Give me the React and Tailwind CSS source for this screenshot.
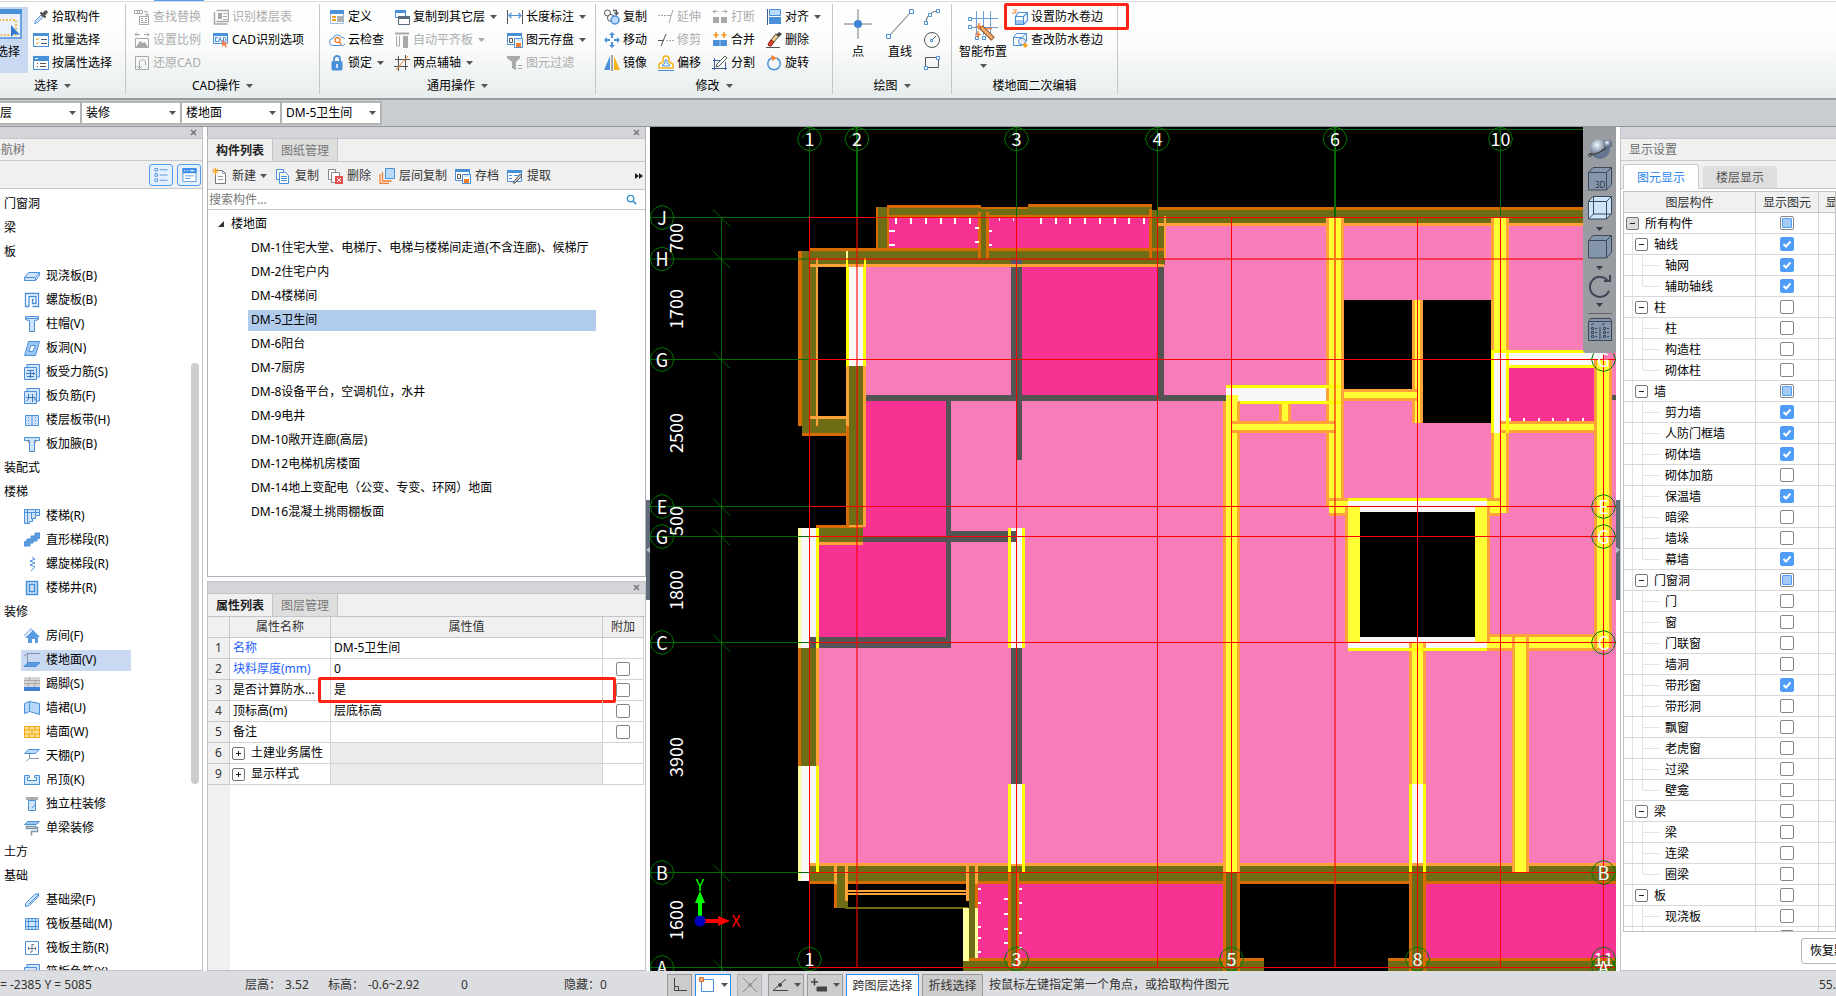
import React, { useState } from 'react';

const B = '#4a90d9';
const L = '#cfe4fb';
const G = '#a8a8a8';
const K = '#555';

// 16x16 line icons for the ribbon, toolbars and navigation tree
const icons = {
  pick: <><path d="M1.500 14.500l1-3 6-6 2 2-6 6z" fill="#cfe4fb" stroke="#5a9be0" /><path d="M7.500 3.500l5 5" stroke="#444" strokeWidth="2" /><path d="M10 6l3-3" stroke="#555" strokeWidth="3.500" strokeLinecap="round" /></>,
  batch: <><rect x=".5" y="1.5" width="15" height="13" fill="#fff" stroke={B} /><path d="M0 1h16v3H0z" fill={B} /><path d="M3 7l1 1 2-2M3 11l1 1 2-2" stroke="#f0a020" /><path d="M8 7.500h6M8 11.500h6" stroke={K} /></>,
  attr: <><rect x=".5" y="1.5" width="15" height="13" fill="#fff" stroke={B} /><path d="M0 1h16v5H0z" fill={B} /><path d="M2 3.500h3" stroke="#fff" /><path d="M4 8.500h1M4 11.500h1M7 8.500h6M7 11.500h6" stroke={K} /></>,
  find: <><path d="M.5 1.500h8v3h-8zM3.500 2v3M5.500 2v3M10 2.500h3v4M11 5l2 2 2-2" stroke={G} /><path d="M5.500 7.500h9v8h-9z" stroke={G} /><path d="M7 9.500h2M11 9.500h2M7 11.500h2M11 11.500h2M7 13.500h6" stroke={G} /></>,
  scale: <><path d="M1 2.500h5M3 .5l-2 2 2 2M10 2.500h5M13 .5l2 2-2 2" stroke={G} /><path d="M1.500 6.500h13v9h-13z" stroke={G} /><path d="M2 15l4-6 3 2 2-1 3 5z" fill={G} /></>,
  restore: <><path d="M1.500 1.500h13v13h-13z" stroke={G} /><path d="M5.500 13V7c0-3 6-3 6 0v3M3 11l2.500 2.500L8 11" stroke={G} /></>,
  floors: <><path d="M3.500 1.500h12v11h-12M1.500 3v12h13" stroke={G} strokeWidth="1.500" /><path d="M5 4h4v6H5z" fill={G} /><path d="M10 4.500h4M10 7.500h4M10 10.500h4" stroke={G} /></>,
  cadopt: <><path d="M.5 1.500h14v10H.5z" fill="#eaf3fd" stroke={B} /><path d="M0 1h15v3H0z" fill={B} /><path d="M4.500 5.500h-2v4h2M5.500 10L7 5.500 8.500 10M10.500 5.500v4h1l1.500-1v-2l-1.500-1z" stroke={B} /><path d="M9 8l6 4-2.500.5 1.500 3h-1.500l-1.500-2.500L9 15z" fill="#f08050" /></>,
  define: <><path d="M1.500 2.500h13v12h-13z" fill="#fff" stroke="#9bb8d8" /><path d="M1 1h14v4H1z" fill={B} /><path d="M3 8h4M3 11h4" stroke="#f0a020" strokeWidth="2" /><path d="M8 7h6v6H8z" fill="#b0b0b0" /></>,
  cloud: <><path d="M4 13.500a3.500 3.500 0 010-7 4.500 4.500 0 018.500-1A4 4 0 0113 13.500z" fill="#fff" stroke={B} /><circle cx="8.500" cy="8" r="2.500" stroke="#f08030" strokeWidth="1.300" /><path d="M10 10l2.500 2.500" stroke="#f08030" strokeWidth="1.500" /></>,
  lock: <><path d="M5 7V4a3 3 0 016 0v3" stroke={B} strokeWidth="1.800" /><rect x="2.500" y="6" width="11" height="9.500" rx="1.500" fill={B} /><path d="M8 9v4" stroke="#fff" strokeWidth="1.500" /></>,
  copyfloor: <><path d="M1.500 1.500h10v7h-10z" fill="#fff" stroke={B} /><path d="M1 1h11v3H1z" fill={B} /><path d="M4.500 7.500h11v8h-11z" fill="#fff" stroke="#5b6b7c" /><path d="M4 7h12v3H4z" fill="#5b6b7c" /></>,
  level: <><path d="M1 1.500h14" stroke={G} strokeWidth="2" /><path d="M2.500 4v10h3V4" stroke={G} /><path d="M9 4h5v12H9z" fill={G} /></>,
  axis: <><path d="M1 4.500h15M0 11.500h14M4.500 1v15M11.500 0v15" stroke={K} /><path d="M2 15L14 1" stroke="#f08030" /></>,
  dim: <><path d="M.5 1v14M15.500 1v14" stroke={K} /><path d="M2 6.500h12M4.500 4L2 6.500 4.500 9M11.500 4L14 6.500 11.500 9" stroke={B} strokeWidth="1.200" /></>,
  save: <><path d="M.5 1.500h14v11H.5z" fill="#fff" stroke={B} /><path d="M0 1h15v3H0z" fill={B} /><path d="M2.500 6.500h3v4h-3z" stroke={K} /><path d="M7.500 6.500h8v9h-8z" fill="#fff" stroke={B} /><path d="M9 7h5v2H9z" fill={L} /><path d="M9 11h5v4H9z" fill="#f08030" /></>,
  filter: <><path d="M0 1h13v2L9 7v8l-4-2V7L0 3z" fill={G} /><path d="M11 10.500h4M11 13.500h4" stroke={G} /></>,
  copy2: <><circle cx="3.500" cy="4" r="3" fill="#fff" stroke={K} /><circle cx="7" cy="9" r="3.500" fill="#fff" stroke={K} /><circle cx="11" cy="11" r="4" fill="#b9d9fa" stroke={B} strokeWidth="1.500" /><path d="M9 1.500h3.500V5M10.500 3.500l2 2 2-2" stroke={K} strokeWidth="1.300" /></>,
  move: <path d="M8 0l3 3H9v3H7V3H5zM8 16l3-3H9v-3H7v3H5zM0 8l3-3v2h3v2H3v2zM16 8l-3-3v2h-3v2h3v2z" fill={B} />,
  mirror: <><path d="M6 1v14H0z" fill={B} /><path d="M8 0v16" stroke={K} /><path d="M10 1v14h6z" fill="#f8b21c" /></>,
  extend: <><path d="M0 6.500h2M3 6.500h2M6 6.500h2M9 6.500h4" stroke={G} /><path d="M11 14l4-13" stroke={G} /></>,
  trim: <><path d="M0 8.500h6M3 14L8 2" stroke={K} /><path d="M8 8.500h2M11 8.500h2M14 8.500h2" stroke={G} /></>,
  offset: <><path d="M5 7V4a3 3 0 016 0v3l4 2v4H1V9z" fill="#fff" stroke="#f8b21c" strokeWidth="1.500" /><path d="M0 15.500h16M4.500 11V9.500l2.500-1V5h2v3.500l2.500 1V11z" stroke={B} /></>,
  breakk: <><path d="M1 2.500h5M3 .5l-2 2 2 2M10 2.500h5M13 .5l2 2-2 2" stroke={G} /><path d="M1 8h6v6H1zM9 8h6v6H9z" fill={G} /></>,
  merge: <><path d="M4 0v6M1.500 3h5M12 0v6M9.500 3h5" stroke="#f09020" strokeWidth="1.500" /><path d="M1 8h14v6H1z" fill={B} /><path d="M8 8v6" stroke="#9cc6f2" /></>,
  split: <><path d="M2.500 3v12M0 13.500h15M13.500 7v8M1 5.500h8" stroke="#3a5f96" /><path d="M4 12l1-3 8-8 2 2-8 8z" fill="#fff" stroke={K} /></>,
  align: <><path d="M3.500 .5h11v6h-11z" fill="#b9d9fa" stroke={B} /><path d="M3 8h12v7H3z" fill={B} /><path d="M1.500 0v16" stroke="#3a5f96" /></>,
  erase: <><path d="M4 9l6-7 3 2-6 7z" fill="#f3d28a" stroke="#444" /><path d="M2 12l3-4 3 2-3 4H3z" fill="#e0452c" stroke="#802010" /><path d="M0 15.500h14" stroke={K} /><path d="M10 3l3-3 3 2-3 3z" fill="#444" /></>,
  rotate: <><path d="M10.500 3a6.200 6.200 0 11-5 0" stroke={B} strokeWidth="1.500" /><path d="M5 0l6 3-5 3z" fill="#f08030" /></>,
  arc: <><path d="M2 14C2 8 6 3 13 2" stroke={K} /><path d="M.5 12.500h3v3h-3zM4.500 4.500h3v3h-3zM12.500 .5h3v3h-3z" fill="#fff" stroke={B} /></>,
  circle: <><circle cx="8" cy="8" r="7.500" stroke={K} /><path d="M8 8l4-4" stroke={K} /><path d="M6.500 7.500h2v2h-2z" fill="#fff" stroke={B} /></>,
  rect: <><path d="M1.500 2.500h13v10h-13z" stroke={K} /><path d="M.5 11.500h3v3h-3zM12.500 1.500h3v3h-3z" fill="#fff" stroke={B} /></>,
  wpset: <><path d="M3.500 7.500h8v8h-8zM3.500 7.500l3-4h9l-4 4M15.500 3.500v8l-4 4" fill="#fff" stroke={B} strokeWidth="1.200" /><path d="M4 11h7v4H4z" fill="#9cc6f2" /><path d="M1 0l3 3M4 0v4H0" stroke="#f08030" /></>,
  wpedit: <><path d="M1.500 5.500h8v8h-8zM1.500 5.500l3-4h10l-5 4M14.500 1.500v8" fill="#fff" stroke={B} /><circle cx="10" cy="9.500" r="3.500" fill="#e6e6ee" stroke={B} /><path d="M13 10.500l3 3-3 2.500-2.500-3z" fill="#f8a01c" /></>,
  newdoc: <><path d="M3.500 2.500h7l3 3v10h-10z" fill="#fff" stroke="#777" /><path d="M10.500 2.500v3h3M6 8.500h5M6 11.500h5" stroke="#999" /><path d="M0 3h7M3.500 0v7M1 .5l5 5M6 .5l-5 5" stroke="#f8a01c" /></>,
  copydoc: <><path d="M1.500 1.500h7v10h-7z" fill="#fff" stroke={B} /><path d="M4.500 4.500h6l3 3v8h-9z" fill="#fff" stroke={B} /><path d="M6 8.500h6M6 10.500h6M6 12.500h6" stroke={B} /></>,
  deldoc: <><path d="M1.500 1.500h7v10h-7z" fill="#fff" stroke="#888" /><path d="M4.500 4.500h8v10h-8z" fill="#fff" stroke="#888" /><path d="M8 8h8v8H8z" fill="#e0504c" /><path d="M10 10l4 4M14 10l-4 4" stroke="#fff" /></>,
  layercopy: <><path d="M1 6v9.500h9M3.500 4v9h9" stroke="#f08030" strokeWidth="1.300" /><path d="M6.500 .5h9v10h-9z" fill="#b9d9fa" stroke={B} /></>,
  extract: <><path d="M.5 2.500h14v11H.5z" fill="#fff" stroke={B} /><path d="M0 2h15v3H0z" fill={B} /><path d="M2 7.500h3M2 10.500h3M7 7.500h4" stroke={B} /><path d="M6 15l7-9 2 2-7 7z" fill="#ccc" stroke={K} /></>,
  slab: <path d="M.5 9.500l4-5h11l-4 5zM.5 9.500v3h11v-3M11.500 12.500l4-5v-3" fill={L} stroke={B} />,
  spiral: <path d="M5 14.500H1.500v-13h13v13h-6M5 14.500v-10h7v7H8.500v-4H10" fill="none" stroke={B} strokeWidth="1.300" />,
  cap: <path d="M1.500 .5h13v3l-3 1h-1v11h-5v-11h-1l-3-1zM2 2.500h12" fill={L} stroke={B} />,
  hole: <><path d="M.5 15.500l4-14h11l-4 14z" fill="#9cc6f2" stroke={B} /><path d="M5 11.500l2-6h4l-2 6z" fill="#fff" stroke={B} /></>,
  rebarS: <><path d="M.5 3.500h12v12H.5zM3 3V.5h12.500V13H13" fill={L} stroke={B} /><path d="M3 6.500h7M3 12.500h7M6.500 6v8M2 9.500h9M9.500 8v3" stroke="#3b78c0" /></>,
  rebarF: <><path d="M.5 3.500h12v12H.5zM3 3V.5h12.500V13H13" fill={L} stroke={B} /><path d="M4.500 6v5l-2 2M8.500 6v8M2 9.500h9v3" stroke="#3b78c0" /></>,
  band: <><path d="M1.500 3.500h13v10h-13z" fill={L} stroke={B} /><path d="M8 3v11" stroke={B} /><path d="M4.500 5v8M11.500 5v8" stroke={B} strokeDasharray="1 2" /></>,
  haunch: <><path d="M2 3l4 6V5h4v4l4-6z" fill="#f08030" /><path d="M.5 1.500h15v3h-5v11h-5v-11h-5z" fill={L} stroke={B} /></>,
  stair: <path d="M.5 1.500h15v6h-4v3h-3v3h-3v2h-5zM3.500 2v13M7.500 4v7M11.500 2v5M1 4.500h14" fill={L} stroke={B} />,
  flight: <path d="M0 14v-4l3-1V7h4V4h4V1h5v5l-3 1v2H9v2H6v3z" fill="#5a9be0" stroke={B} />,
  helix: <path d="M8 1l3 2-5 2 5 2-5 2 5 2-4 4" fill="none" stroke={B} />,
  well: <path d="M2.500 1.500h11v13h-11zM5.500 4.500h5v7h-5z" fill={L} stroke={B} strokeWidth="1.500" />,
  room: <><path d="M0 8l7-7 2 2" stroke="#9cc6f2" strokeWidth="1.500" /><path d="M1 10l8-8 7 7h-2v6h-3v-4H8v4H4v-5z" fill="#5a9be0" /></>,
  floor: <><path d="M3.500 11V1.500H16M0 4l4-3" stroke="#8095a8" /><path d="M0 14.500l4-4h12l-4 4z" fill="#5a9be0" stroke={B} /></>,
  skirting: <><path d="M0 1h16v10H0z" fill="#d5d5d5" /><path d="M0 4.500h16M0 7.500h16M5.500 1v3M11.500 4v3M4.500 8v3M10.500 8v3" stroke="#aaa" /><path d="M0 11h16v4H0z" fill="#3f84d6" /></>,
  dado: <path d="M.5 3.500l5-2v10l-5 2zM5.500 1.500l10 2v11l-10-3z" fill="#b9d9fa" stroke={B} />,
  wall: <path d="M.5 2.500h15v11H.5zM.5 6h15M.5 10h15M5 2.500V6M11 2.500V6M8 6v4M5 10v3.500M11 10v3.500" fill="#fddc8c" stroke="#f0a818" />,
  ceiling: <><path d="M.5 5.500l4-4h11l-4 4z" fill="#b9d9fa" stroke={B} /><path d="M2 13.500l3-3h10M5.500 6v5" stroke="#8095a8" /></>,
  hung: <path d="M.5 3.500h5v2h-2v3h9v-3h-2v-2h5v9H.5z" fill={L} stroke={B} />,
  pillar: <><path d="M2 1h12v3H2z" fill="#aaa" /><path d="M4.500 4.500h7v10h-7zM8 12l4-4" fill={L} stroke={B} /></>,
  beamdec: <><path d="M.5 4.500l3-3h12l-3 3z" fill="#9cc6f2" stroke={B} /><path d="M2.500 6.500h9v2h-9zM12 7.500h1.500v4H7.500v4" stroke="#8095a8" fill="none" strokeWidth="1.500" /></>,
  fbeam: <path d="M1.500 11.500l9-9 4-1v3l-9 9-4 1zM5 12l9-9" fill={L} stroke={B} />,
  raft: <path d="M1.500 2.500h13v11h-13zM4.500 2v12M11.500 2v12M1 5.500h14M1 10.500h14M8 2v3M8 11v3" fill={L} stroke={B} />,
  raftmain: <><path d="M1.500 1.500h13v13h-13z" fill="#fff" stroke={B} /><path d="M4 8.500h8M8 4v8M4.500 7v3M11.500 7v3M8 4.500h2M6 12h2" stroke="#778" /></>,
  tree: <><path d="M.5 .5h3v3h-3zM.5 6.500h3v3h-3zM.5 12.500h3v3h-3z" stroke={B} /><path d="M6 2h9M6 8h9M6 14h9" stroke={B} /></>,
  card: <><path d="M.5 .5h15v15H.5z" fill="#fff" stroke={B} /><path d="M0 0h16v6H0z" fill="#3f90ec" /><path d="M2 3h1M5 3h1M9 3h4" stroke="#fff" strokeWidth="1.500" /><path d="M3 9h10M3 12h6" stroke={B} /></>,
};

const Icon = ({ name, className = 'w-4 h-4' }) => (
  <svg viewBox="0 0 16 16" className={`${className} shrink-0`} fill="none" stroke="none" aria-hidden="true">{icons[name]}</svg>
);

const Caret = ({ color = '#555' }) => (
  <svg viewBox="0 0 7 4" className="w-[7px] h-1 shrink-0" aria-hidden="true"><path d="M0 0h7L3.500 4z" fill={color} /></svg>
);

const Tool = ({ icon, label, off, menu, mark }) => (
  <button className={`relative flex h-[23px] items-center gap-[3px] whitespace-nowrap ${off ? 'text-[#adadad]' : 'text-black'}`}>
    <Icon name={icon} />
    <span>{label}</span>
    {menu && <span className="ml-[2px]"><Caret color={off ? '#aaa' : '#555'} /></span>}
    {mark && <span className="absolute -top-[2px] -bottom-[2px] -left-2 -right-[26px] rounded-[2px] border-[3px] border-[#ff2413]" />}
  </button>
);

const Column = ({ items }) => (
  <div className="flex flex-col items-start">
    {items.map((t) => <Tool key={t.label} {...t} />)}
  </div>
);

const Group = ({ label, className, children, menu = true }) => (
  <section className={`flex shrink-0 flex-col pt-[5px] ${className}`}>
    <div className="flex h-[69px]">{children}</div>
    <div className="flex h-[26px] items-center justify-center gap-[6px]">
      <span>{label}</span>
      {menu && <Caret />}
    </div>
  </section>
);

const Divider = () => <div className="my-1 w-px shrink-0 bg-[#c4c6c8]" />;

const cadTools = [
  [{ icon: 'find', label: '查找替换', off: true }, { icon: 'scale', label: '设置比例', off: true }, { icon: 'restore', label: '还原CAD', off: true }],
  [{ icon: 'floors', label: '识别楼层表', off: true }, { icon: 'cadopt', label: 'CAD识别选项' }],
];
const commonTools = [
  [{ icon: 'define', label: '定义' }, { icon: 'cloud', label: '云检查' }, { icon: 'lock', label: '锁定', menu: true }],
  [{ icon: 'copyfloor', label: '复制到其它层', menu: true }, { icon: 'level', label: '自动平齐板', off: true, menu: true }, { icon: 'axis', label: '两点辅轴', menu: true }],
  [{ icon: 'dim', label: '长度标注', menu: true }, { icon: 'save', label: '图元存盘', menu: true }, { icon: 'filter', label: '图元过滤', off: true }],
];
const modifyTools = [
  [{ icon: 'copy2', label: '复制' }, { icon: 'move', label: '移动' }, { icon: 'mirror', label: '镜像' }],
  [{ icon: 'extend', label: '延伸', off: true }, { icon: 'trim', label: '修剪', off: true }, { icon: 'offset', label: '偏移' }],
  [{ icon: 'breakk', label: '打断', off: true }, { icon: 'merge', label: '合并' }, { icon: 'split', label: '分割' }],
  [{ icon: 'align', label: '对齐', menu: true }, { icon: 'erase', label: '删除' }, { icon: 'rotate', label: '旋转' }],
];

const Ribbon = () => (
  <header className="h-[100px] shrink-0 overflow-hidden border-b-2 border-[#969a9c] bg-gradient-to-b from-white via-[#fafbfb] to-[#e6ecec]">
    <div className="flex h-[2px] border-b border-[#d8d8d8]"><span className="ml-[154px] w-[50px] bg-[#4f9df0]" /></div>
    <div className="-mt-[2px] flex h-[98px]">
      <Group label="选择" className="w-[125px] [&>div:last-child]:pr-5">
        <button className="mt-[2px] -ml-3 flex h-[66px] w-10 shrink-0 flex-col items-center bg-[#c9d9f1] pt-[2px]">
          <svg viewBox="0 0 28 30" className="h-[30px] w-7" aria-hidden="true">
            <path d="M1 1h26v28H1z" fill="#eaf1fa" stroke={B} strokeWidth="1.500" />
            <path d="M0 0h28v5H0z" fill={B} />
            <path d="M5 11h17v15H5z" fill="none" stroke="#f0b020" strokeWidth="1.500" strokeDasharray="2 1.500" />
            <path d="M17 16v12l3-3 6 1z" fill="#2f7ad0" />
          </svg>
          <span className="mt-[5px]">选择</span>
        </button>
        <div className="ml-[5px]">
          <Column items={[{ icon: 'pick', label: '拾取构件' }, { icon: 'batch', label: '批量选择' }, { icon: 'attr', label: '按属性选择' }]} />
        </div>
      </Group>
      <Divider />
      <Group label="CAD操作" className="w-[193px]">
        <div className="flex gap-3 pl-2">{cadTools.map((c) => <Column key={c[0].label} items={c} />)}</div>
      </Group>
      <Divider />
      <Group label="通用操作" className="w-[275px]">
        <div className="flex gap-[10px] pl-[9px]">{commonTools.map((c) => <Column key={c[0].label} items={c} />)}</div>
      </Group>
      <Divider />
      <Group label="修改" className="w-[236px]">
        <div className="flex gap-[11px] pl-2">{modifyTools.map((c) => <Column key={c[0].label} items={c} />)}</div>
      </Group>
      <Divider />
      <Group label="绘图" className="w-[118px]">
        <button className="ml-[9px] flex w-8 flex-col items-center pt-1">
          <svg viewBox="0 0 28 30" className="h-[30px] w-7" aria-hidden="true"><path d="M14 0v30M0 15h28" stroke="#777" /><circle cx="14" cy="15" r="4" fill="#3f84d6" /></svg>
          <span className="mt-[5px]">点</span>
        </button>
        <button className="ml-[10px] flex w-8 flex-col items-center pt-1">
          <svg viewBox="0 0 28 30" className="h-[30px] w-7" fill="none" aria-hidden="true"><path d="M3 27L25 3" stroke="#666" /><path d="M.5 25.500h4v4h-4zM23.500 .5h4v4h-4z" fill="#fff" stroke={B} /></svg>
          <span className="mt-[5px]">直线</span>
        </button>
        <div className="ml-2 flex flex-col">
          {[['arc', '弧'], ['circle', '圆'], ['rect', '矩形']].map(([n, t]) => (
            <button key={n} aria-label={t} className="flex h-[23px] items-center"><Icon name={n} /></button>
          ))}
        </div>
      </Group>
      <Divider />
      <Group label="楼地面二次编辑" menu={false} className="w-[165px] [&>div:last-child]:pt-[2px]">
        <button className="ml-[6px] flex w-[50px] shrink-0 flex-col items-center pt-[6px]">
          <svg viewBox="0 0 30 30" className="h-[30px] w-[30px]" fill="none" aria-hidden="true">
            <path d="M8.500 0v24M15.500 0v24M22.500 0v24M3 7.500h27M3 16.500h27" stroke="#6a9fd8" />
            <path d="M.5 6.500h3v3h-3zM.5 14.500h3v3h-3zM7.500 25.500h3v3h-3zM14.500 25.500h3v3h-3z" fill="#fff" stroke={B} />
            <path d="M13 16l12 12" stroke="#8a4a20" strokeWidth="5" /><path d="M13.500 16.500l11 11" stroke="#f2b070" strokeWidth="3" />
            <path d="M11 12v7M7.500 15.500h7M7 23.500h6M10 20v7M18 17.500h6" stroke="#f08030" strokeWidth="1.500" />
          </svg>
          <span className="mt-[3px] whitespace-nowrap">智能布置</span>
          <span className="mt-1 flex"><Caret /></span>
        </button>
        <div className="ml-1">
          <Column items={[{ icon: 'wpset', label: '设置防水卷边', mark: true }, { icon: 'wpedit', label: '查改防水卷边' }]} />
        </div>
      </Group>
      <Divider />
    </div>
  </header>
);

const Combo = ({ label, value, className }) => (
  <div className={`flex h-6 items-center border-2 border-l-0 border-[#b4b4b4] bg-white pr-1 ${className}`}>
    <select aria-label={label} className="min-w-0 flex-1 appearance-none bg-transparent leading-5 outline-none">
      <option>{value}</option>
    </select>
    <Caret />
  </div>
);

const PanelStrip = ({ close = true }) => (
  <div className="flex h-3 shrink-0 items-center justify-end border-b border-[#c3c5cb] bg-[#d4d5da] pr-[5px]">
    {close && (
      <button aria-label="关闭" className="flex"><svg viewBox="0 0 7 7" className="h-[7px] w-[7px]"><path d="M1 1l5 5M6 1L1 6" stroke="#777" strokeWidth="1.500" /></svg></button>
    )}
  </div>
);

const navItems = [
  ['门窗洞'], ['梁'], ['板'],
  ['现浇板(B)', 'slab'], ['螺旋板(B)', 'spiral'], ['柱帽(V)', 'cap'], ['板洞(N)', 'hole'], ['板受力筋(S)', 'rebarS'],
  ['板负筋(F)', 'rebarF'], ['楼层板带(H)', 'band'], ['板加腋(B)', 'haunch'],
  ['装配式'], ['楼梯'],
  ['楼梯(R)', 'stair'], ['直形梯段(R)', 'flight'], ['螺旋梯段(R)', 'helix'], ['楼梯井(R)', 'well'],
  ['装修'],
  ['房间(F)', 'room'], ['楼地面(V)', 'floor'], ['踢脚(S)', 'skirting'], ['墙裙(U)', 'dado'], ['墙面(W)', 'wall'],
  ['天棚(P)', 'ceiling'], ['吊顶(K)', 'hung'], ['独立柱装修', 'pillar'], ['单梁装修', 'beamdec'],
  ['土方'], ['基础'],
  ['基础梁(F)', 'fbeam'], ['筏板基础(M)', 'raft'], ['筏板主筋(R)', 'raftmain'], ['筏板负筋(X)', 'rebarF'],
];

const NavPanel = () => {
  const [active, setActive] = useState('楼地面(V)');
  return (
    <aside className="flex w-[203px] shrink-0 flex-col border-r border-b border-[#c0c2c8] bg-white">
      <PanelStrip />
      <div className="flex h-[22px] shrink-0 items-center overflow-hidden border-b border-[#c8c8cc] bg-[#f0f0f0] pt-px">
        <h2 className="-ml-[11px] text-[#6e6e6e]">导航树</h2>
      </div>
      <div className="flex h-7 shrink-0 items-center justify-end gap-1 border-b border-[#c8c8cc] bg-[#f0f0f0] pr-px">
        {[['tree', '列表'], ['card', '卡片']].map(([n, t]) => (
          <button key={n} aria-label={t} className="flex h-[22px] w-6 items-center justify-center rounded-[3px] border border-[#4f9df0] bg-[#e4f0fd]"><Icon name={n} className="h-[14px] w-[15px]" /></button>
        ))}
      </div>
      <div className="flex min-h-0 flex-1 overflow-hidden">
        <ul className="flex-1 pt-[3px]">
          {navItems.map(([name, icon]) => (
            <li key={name} className={`flex h-6 items-center ${icon ? 'pl-[21px]' : 'pl-1'}`}>
              <button
                onClick={() => icon && setActive(name)}
                className={`flex h-[21px] items-center gap-[6px] ${icon ? 'w-[110px] pl-[3px]' : ''} ${active === name ? 'bg-[#c9d9f1]' : ''}`}
              >
                {icon && <Icon name={icon} />}
                {name}
              </button>
            </li>
          ))}
        </ul>
        <div className="mt-[174px] mr-[3px] h-[421px] w-2 shrink-0 rounded-full bg-[#cdcdcd]" />
      </div>
    </aside>
  );
};

const Tabs = ({ items }) => (
  <div className="flex h-[23px] shrink-0 border-b border-[#c3c5cb] bg-[#f0f0f0]">
    {items.map((t, i) => (
      <button key={t} className={`w-[65px] border-r border-[#c3c5cb] pt-px ${i === 0 ? 'bg-[#f0f0f0] font-bold text-[#222]' : 'bg-[#dedede] text-[#777]'}`}>{t}</button>
    ))}
  </div>
);

const components = [
  'DM-1住宅大堂、电梯厅、电梯与楼梯间走道(不含连廊)、候梯厅', 'DM-2住宅户内', 'DM-4楼梯间', 'DM-5卫生间', 'DM-6阳台', 'DM-7厨房',
  'DM-8设备平台，空调机位，水井', 'DM-9电井', 'DM-10敞开连廊(高层)', 'DM-12电梯机房楼面', 'DM-14地上变配电（公变、专变、环网）地面', 'DM-16混凝土挑雨棚板面',
];

const listTools = [['newdoc', '新建', true], ['copydoc', '复制'], ['deldoc', '删除'], ['layercopy', '层间复制'], ['save', '存档'], ['extract', '提取']];

const ComponentPanel = () => {
  const [active, setActive] = useState('DM-5卫生间');
  return (
    <section className="flex h-[450px] shrink-0 flex-col border border-t-0 border-[#b4b4b8] bg-white">
      <PanelStrip />
      <Tabs items={['构件列表', '图纸管理']} />
      <div className="flex h-[28px] shrink-0 items-center gap-2 border-b border-[#c3c5cb] bg-[#f0f0f0] pt-px pl-1 text-[#333]">
        {listTools.map(([icon, label, menu]) => (
          <button key={label} className="flex items-center gap-1">
            <Icon name={icon} />{label}{menu && <Caret />}
          </button>
        ))}
        <button aria-label="更多" className="ml-auto pr-[2px]">
          <svg viewBox="0 0 8 6" className="h-[6px] w-2"><path d="M0 0l4 3-4 3zM4 0l4 3-4 3z" fill="#222" /></svg>
        </button>
      </div>
      <div className="flex h-5 shrink-0 items-center border-b border-[#c3c5cb] pr-2 pl-px">
        <input aria-label="搜索构件" placeholder="搜索构件..." className="min-w-0 flex-1 outline-none placeholder:text-[#777]" />
        <svg viewBox="0 0 12 12" className="h-[11px] w-[11px]" fill="none"><circle cx="5" cy="5" r="3.500" stroke="#3b93d0" strokeWidth="1.500" /><path d="M8 8l3 3" stroke="#3b93d0" strokeWidth="2" /></svg>
      </div>
      <div className="flex-1 overflow-hidden pt-[2px]">
        <div className="flex h-6 items-center gap-[7px] pl-[10px]">
          <svg viewBox="0 0 6 6" className="h-[6px] w-[6px]"><path d="M6 0v6H0z" fill="#333" /></svg>
          楼地面
        </div>
        <ul>
          {components.map((c) => (
            <li key={c} className="flex h-6 items-center pr-[49px] pl-10">
              <button onClick={() => setActive(c)} className={`h-[21px] flex-1 pl-[3px] text-left whitespace-nowrap ${active === c ? 'bg-[#b1cbec]' : ''}`}>{c}</button>
            </li>
          ))}
        </ul>
      </div>
    </section>
  );
};

const Check = ({ id, state, label }) => (
  <span className="grid h-[14px] w-[14px]">
    <input
      id={id} type="checkbox" aria-label={label} defaultChecked={state === 1}
      className="peer h-[14px] w-[14px] appearance-none rounded-[2px] border border-[#858585] bg-white [grid-area:1/1] checked:border-[#4f9df8] checked:bg-[#4f9df8]"
    />
    <svg viewBox="0 0 14 14" className="pointer-events-none hidden h-[14px] w-[14px] [grid-area:1/1] peer-checked:block" fill="none"><path d="M3.500 7l2.500 2.500 4.500-5" stroke="#fff" strokeWidth="2" /></svg>
    {state === 2 && <span className="pointer-events-none m-[2px] rounded-[1px] border border-[#4f9df8] bg-[#a3cbfa] [grid-area:1/1]" />}
  </span>
);

const Fold = ({ open, dark }) => (
  <button aria-label={open ? '收起' : '展开'} className={`flex h-[13px] w-[13px] shrink-0 items-center justify-center rounded-[2px] border border-[#777] ${dark ? 'bg-[#dcdcdc]' : 'bg-white'}`}>
    <svg viewBox="0 0 7 7" className="h-[7px] w-[7px]"><path d={open ? 'M1 3.500h5' : 'M1 3.500h5M3.500 1v5'} stroke="#222" /></svg>
  </button>
);

const props = [
  { n: 1, name: '名称', value: 'DM-5卫生间', blue: true },
  { n: 2, name: '块料厚度(mm)', value: '0', blue: true, check: true },
  { n: 3, name: '是否计算防水...', value: '是', check: true, mark: true },
  { n: 4, name: '顶标高(m)', value: '层底标高', check: true },
  { n: 5, name: '备注', value: '', check: true },
  { n: 6, name: '土建业务属性', group: true },
  { n: 9, name: '显示样式', group: true },
];

const PropertyPanel = () => (
  <section className="mt-1 flex min-h-0 flex-1 flex-col border border-[#c0c2c8] bg-white">
    <PanelStrip />
    <Tabs items={['属性列表', '图层管理']} />
    <div className="flex-1 bg-[linear-gradient(to_right,#f0f0f0_22px,white_22px)]">
      <table className="w-[436px] table-fixed border-separate border-spacing-0 [&_td]:h-[21px] [&_td]:border-r [&_td]:border-b [&_td]:border-[#d4d4d4] [&_th]:h-[21px] [&_th]:border-r [&_th]:border-b [&_th]:border-[#c8c8c8] [&_th]:bg-[#f0f0f0] [&_th]:font-normal [&_th]:text-[#333]">
        <colgroup><col className="w-[22px]" /><col className="w-[101px]" /><col /><col className="w-[41px]" /></colgroup>
        <thead>
          <tr><th aria-label="序号" /><th>属性名称</th><th>属性值</th><th>附加</th></tr>
        </thead>
        <tbody>
          {props.map((p) => (
            <tr key={p.n}>
              <th>{p.n}</th>
              <td className={`whitespace-nowrap ${p.blue ? 'text-[#1f5fff]' : ''}`}>
                {p.group
                  ? <span className="flex items-center gap-[6px] pl-[2px]"><Fold />{p.name}</span>
                  : <span className="pl-[3px]">{p.name}</span>}
              </td>
              <td className={`relative pl-[3px] ${p.group ? 'bg-[#ebebeb]' : ''}`}>
                {p.value}
                {p.mark && <span className="absolute -top-[3px] -right-[14px] -bottom-[3px] -left-[13px] rounded-[2px] border-[3px] border-[#ff2413]" />}
              </td>
              <td><span className="flex justify-center">{p.check && <Check label={`附加 ${p.name}`} />}</span></td>
            </tr>
          ))}
        </tbody>
      </table>
    </div>
  </section>
);

// drawing colours
const LP = '#f87cb8';
const DP = '#f83292';
const OL = '#6e6d16';
const DO = '#d86c00';
const LO = '#ffa238';
const YE = '#ffff33';
const BY = '#ffff00';
const PY = '#ffff9a';
const GR = '#545454';
const WH = '#f8f8f8';

// a wall with an edge line on both sides
const wallV = (x1, x2, y1, y2, fill, a, b = a) => [[x1, y1, x2, y2, fill], [x1, y1, x1 + 3, y2, a], [x2 - 3, y1, x2, y2, b]];
const wallH = (x1, x2, y1, y2, fill, a, b = a) => [[x1, y1, x2, y2, fill], [x1, y1, x2, y1 + 3, a], [x1, y2 - 3, x2, y2, b]];

// [left, top, right, bottom, fill]
const blocks = [
  // rooms
  [865, 267, 1616, 864, LP], [1164, 224, 1616, 268, LP], [818, 648, 868, 864, LP],
  [888, 217, 980, 248, DP], [988, 217, 1151, 248, DP], [1022, 267, 1158, 396, DP],
  [863, 400, 946, 538, DP], [818, 542, 946, 637, DP], [1509, 367, 1596, 421, DP],
  [978, 884, 1008, 959, DP], [1019, 884, 1224, 959, DP], [1426, 884, 1616, 959, DP],
  [1343, 300, 1413, 390, '#000'], [1422, 300, 1492, 423, '#000'], [1360, 512, 1475, 637, '#000'],
  // partitions
  [866, 395, 1226, 401, GR], [1011, 260, 1022, 396, GR], [1016, 400, 1022, 460, GR], [1157, 260, 1164, 396, GR],
  [946, 400, 951, 648, GR], [951, 531, 1017, 542, GR], [863, 537, 946, 542, GR], [809, 637, 951, 648, GR],
  [1011, 648, 1022, 784, GR], [1612, 395, 1616, 400, GR],
  // top walls
  [876, 207, 889, 248, OL], [887, 207, 1152, 217, OL], [1152, 210, 1165, 265, OL],
  [876, 207, 878, 248, DO], [887, 205, 981, 208, DO], [887, 205, 889, 248, DO], [981, 207, 1028, 209, DO], [1028, 204, 1152, 207, DO],
  [887, 215, 1152, 217, DO],
  ...wallH(1158, 1616, 207, 226, OL, DO, LO),
  ...wallH(809, 1164, 248, 267, OL, DO, LO),
  ...wallV(978, 989, 212, 258, OL, DO),
  [1149, 209, 1152, 258, DO], [1164, 216, 1166, 258, LO], [1011, 260, 1022, 264, '#55546a'],
  // left walls
  [799, 251, 816, 426, OL], [802, 419, 847, 436, OL], [798, 251, 802, 426, DO], [802, 433, 848, 436, DO],
  [816, 258, 818, 426, LO], [809, 264, 847, 267, LO], [809, 416, 847, 419, LO],
  [846, 251, 848, 258, PY], ...wallV(846, 866, 258, 366, WH, BY), [848, 258, 864, 264, OL], [848, 264, 864, 267, LO],
  ...wallV(846, 866, 366, 527, OL, LO), [846, 426, 849, 527, DO],
  [816, 525, 863, 542, OL], [816, 525, 863, 528, DO], [849, 525, 866, 527, LO], [818, 542, 863, 545, LO],
  ...wallV(798, 819, 528, 648, WH, PY, BY), [809, 637, 816, 648, GR],
  ...wallV(798, 819, 648, 766, OL, DO, LO),
  ...wallV(798, 819, 766, 881, WH, PY, BY),
  // windows on axis 3
  ...wallV(1008, 1025, 528, 648, WH, BY), [1011, 531, 1017, 542, GR],
  // bottom wall
  ...wallH(810, 1616, 863, 884, OL, LO, DO),
  [816, 863, 819, 873, BY],
  ...wallV(1008, 1025, 784, 864, WH, BY), [1008, 864, 1011, 872, BY], [1022, 864, 1025, 872, BY],
  [834, 866, 848, 908, OL], [834, 866, 837, 884, LO], [834, 884, 837, 908, DO], [845, 866, 848, 901, LO],
  [848, 884, 968, 908, '#000'], [848, 890, 968, 892, LO], [848, 893, 968, 895, LO], [845, 907, 968, 909, OL],
  [969, 866, 978, 961, OL], [966, 866, 969, 901, LO], [975, 866, 978, 884, LO], [975, 884, 978, 908, DO],
  [963, 908, 969, 961, PY], [975, 908, 978, 961, PY],
  [969, 958, 1264, 961, DO], [963, 961, 1264, 971, OL], [1388, 958, 1616, 961, DO], [1388, 961, 1616, 971, OL],
  ...wallV(1008, 1019, 873, 968, OL, DO),
  ...wallV(1223, 1240, 873, 971, OL, DO),
  ...wallV(1409, 1426, 873, 971, OL, DO),
  // inner yellow walls
  ...wallV(1326, 1344, 217, 506, YE, LO),
  ...wallV(1491, 1509, 217, 513, YE, LO),
  ...wallV(1412, 1423, 300, 423, YE, LO),
  ...wallH(1344, 1417, 389, 401, YE, LO),
  ...wallH(1226, 1341, 385, 404, WH, BY), [1326, 388, 1329, 401, LO], [1329, 388, 1341, 401, YE],
  ...wallV(1223, 1240, 401, 873, YE, LO), [1226, 395, 1238, 402, YE],
  ...wallV(1279, 1291, 404, 430, YE, LO),
  ...wallH(1232, 1335, 421, 433, YE, LO), [1282, 424, 1288, 430, YE],
  ...wallH(1329, 1348, 498, 516, YE, LO), ...wallH(1487, 1500, 498, 516, YE, LO),
  ...wallH(1491, 1603, 350, 368, WH, BY),
  ...wallV(1491, 1509, 353, 433, WH, BY),
  ...wallH(1500, 1603, 421, 433, YE, LO), [1506, 421, 1509, 433, BY],
  ...wallH(1487, 1608, 634, 651, YE, LO),
  ...wallV(1594, 1612, 359, 648, YE, LO),
  ...wallV(1512, 1529, 637, 873, YE, LO),
  [1348, 498, 1487, 512, WH], [1348, 498, 1487, 501, BY], [1345, 507, 1348, 642, LO], [1487, 507, 1490, 642, LO],
  [1348, 507, 1360, 642, YE], [1475, 507, 1487, 642, YE], [1348, 637, 1487, 651, WH], [1348, 637, 1360, 642, YE], [1475, 637, 1487, 642, YE], [1348, 648, 1487, 651, BY],
  ...wallV(1409, 1426, 642, 784, YE, LO), [1409, 648, 1426, 651, BY],
  ...wallV(1409, 1426, 784, 863, WH, BY), [1409, 863, 1412, 873, BY], [1423, 863, 1426, 873, BY],
  // hatch marks of the waterproof upstand
  ...[895, 910, 925, 940, 954, 969, 1040, 1055, 1069, 1084, 1099, 1114, 1128, 1143].map((x) => [x, 218, x + 2, 224, '#fff']),
  ...[999, 1013].map((x) => [x, 218, x + 1, 221, '#fff']),
  ...[230, 244].flatMap((y) => [[889, y, 895, y + 2, '#fff'], [975, y - 3, 979, y - 1, '#fff'], [989, y, 992, y + 2, '#fff']]),
  ...[1509, 1523, 1538, 1552, 1567, 1582].map((x) => [x, 418, x + 2, 421, '#fff']),
  ...[888, 902, 926, 937, 951].map((y) => [978, y, 981, y + 2, '#fff']),
  ...[898, 913, 928, 942].map((y) => [1004, y, 1008, y + 2, '#fff']),
  ...[888, 902, 918, 932, 947].map((y) => [1019, y, 1022, y + 2, '#fff']),
];

const colsX = [809.5, 1016.5, 1157.5, 1231.5, 1417.5, 1500.5, 1603.5];
const rowsY = [217.5, 359.5, 506.5, 536.5, 642.5, 872.5, 967.5];
const topAxes = [['1', 809.5], ['2', 857], ['3', 1016.5], ['4', 1157.5], ['6', 1335], ['10', 1500.5]];
const bottomAxes = [['1', 809.5], ['3', 1016.5], ['5', 1231.5], ['8', 1417.5], ['11', 1603.5]];
const leftAxes = [['J', 217.5], ['H', 259], ['G', 359.5], ['E', 506.5], ['G', 536.5], ['C', 642.5], ['B', 872.5], ['A', 967.5]];
const dims = [['700', 238], ['1700', 309], ['2500', 433], ['500', 521], ['1800', 590], ['3900', 757], ['1600', 920]];

// axis bubbles are drawn as twelve-sided polygons
const Bubble = ({ x, y, text }) => (
  <g>
    <path d={`M${x} ${y - 12}l6 2 4 4 2 6-2 6-4 4-6 2-6-2-4-4-2-6 2-6 4-4z`} fill="none" stroke="#007800" />
    <text x={x} y={y + 7} textAnchor="middle" fill="#fff">{text}</text>
  </g>
);

const Drawing = () => (
  <svg viewBox="650 127 966 844" preserveAspectRatio="xMinYMin slice" className="h-full w-full bg-black font-['Noto_Sans_CJK_SC',sans-serif] text-[18px]">
    <g shapeRendering="crispEdges">
      {blocks.map(([x1, y1, x2, y2, c], i) => <rect key={i} x={x1} y={y1} width={x2 - x1} height={y2 - y1} fill={c} />)}
    </g>
    <g stroke="#006a00" fill="none">
      <path d="M809 129.500H1616M721.500 217V971" />
      {topAxes.map(([t, x]) => <path key={t} d={`M${x} 127V217`} strokeWidth={x % 1 ? 1 : 2} />)}
      {leftAxes.map(([t, y]) => <path key={y} d={`M650 ${y}H809M713 ${y - 8}l17 17`} />)}
      {topAxes.map(([t, x]) => <path key={t} d={`M${x - 8} 138l9 -9`} />)}
    </g>
    <g stroke="#ff0000" fill="none">
      {colsX.map((x) => <path key={x} d={`M${x} 217V968`} />)}
      {rowsY.map((y) => <path key={y} d={`M809 ${y}H1616`} />)}
      <path d="M857 217V968M1335 217V968M809 259H1616" strokeWidth="2" opacity=".55" />
    </g>
    {topAxes.map(([t, x]) => <Bubble key={t} x={x} y={139} text={t} />)}
    {bottomAxes.map(([t, x]) => <Bubble key={t} x={x} y={959} text={t} />)}
    {leftAxes.map(([t, y]) => <Bubble key={y} x={662} y={y} text={t} />)}
    {leftAxes.slice(2).map(([t, y]) => <Bubble key={y} x={1603.5} y={y} text={t} />)}
    {dims.map(([t, y]) => <text key={t} transform={`translate(683 ${y}) rotate(-90)`} textAnchor="middle" fill="#fff">{t}</text>)}
    <path d="M700 921V900" stroke="#00ff00" strokeWidth="4" />
    <path d="M695 903l5-12 5 12z" fill="#00ff00" />
    <path d="M700 921h20" stroke="#ff0000" strokeWidth="4" />
    <path d="M718 916l12 5-12 5z" fill="#ff0000" />
    <circle cx="700" cy="921" r="5.500" fill="#0000c0" />
    <text x="700" y="891" textAnchor="middle" fill="#00ff00" className="text-[16px]">Y</text>
    <text x="736" y="927" textAnchor="middle" fill="#ff0000" className="text-[16px]">X</text>
  </svg>
);

const Cube = ({ wire, text }) => (
  <svg viewBox="0 0 24 24" className="h-6 w-6" fill="none" aria-hidden="true">
    <path d="M.5 5.500L5 .5h18.500v17L18.500 23H.5z" fill={wire ? '#cfe5fb' : '#8496ac'} stroke="#3c4656" />
    <path d="M.5 5.500h18V23M18.500 5.500l5-5" stroke="#3c4656" />
    {wire && <path d="M5.500 .5V18h18M.5 23l5-5" stroke="#3c4656" />}
    {text && <text x="7" y="21" fontSize="8" fill="#28303c">{text}</text>}
  </svg>
);

const ViewBar = () => (
  <div className="absolute top-0 right-0 flex h-[226px] w-[33px] flex-col items-center rounded-b-[3px] bg-[#999ca0] pt-[10px]">
    <button aria-label="动态观察">
      <svg viewBox="0 0 24 24" className="h-6 w-6" fill="none" aria-hidden="true">
        <defs><radialGradient id="ball" cx=".35" cy=".3"><stop offset="0" stopColor="#f2f6fc" /><stop offset="1" stopColor="#62748e" /></radialGradient></defs>
        <circle cx="12" cy="12" r="10" fill="url(#ball)" />
        <path d="M2 17c5 2 15-4 18-9" stroke="#444" strokeWidth="1.500" /><circle cx="20" cy="7" r="4" fill="url(#ball)" stroke="#667" strokeWidth=".5" /><circle cx="2" cy="18" r="1.500" stroke="#444" />
      </svg>
    </button>
    <button aria-label="三维" className="mt-[6px]"><Cube text="3D" /></button>
    <button aria-label="线框" className="mt-[5px]"><Cube wire /></button>
    <span className="mt-[7px] flex"><Caret color="#333c48" /></span>
    <button aria-label="实体" className="mt-[4px]"><Cube /></button>
    <span className="mt-[7px] flex"><Caret color="#333c48" /></span>
    <button aria-label="旋转视图" className="mt-[4px]">
      <svg viewBox="0 0 24 24" className="h-6 w-6" fill="none" aria-hidden="true"><path d="M21 17A10 10 0 1120 7" stroke="#3c4656" strokeWidth="2" /><path d="M16 7h6V1" stroke="#3c4656" strokeWidth="2" /></svg>
    </button>
    <span className="mt-[5px] flex"><Caret color="#333c48" /></span>
    <div className="mt-[6px] h-px w-6 bg-[#666]" />
    <button aria-label="显示设置" className="mt-1">
      <svg viewBox="0 0 24 24" className="h-6 w-6" fill="none" stroke="#3c4656" aria-hidden="true">
        <path d="M.5 3.500l2-3h20l1 3v19H.5z" fill="#8496ac" /><path d="M.5 3.500h23M12 9v12M3 6l1 1 2-2M14 6l1 1 2-2" />
        <path d="M3.500 9.500h2v2h-2zM3.500 13.500h2v2h-2zM3.500 17.500h2v2h-2zM15.500 9.500h2v2h-2zM15.500 13.500h2v2h-2zM15.500 17.500h2v2h-2zM7 10.500h2M7 14.500h2M7 18.500h2M19 10.500h2M19 14.500h2M19 18.500h2" />
      </svg>
    </button>
  </div>
);

// [name, level, state, last child]; state: 0 off, 1 on, 2 partly on
const layers = [
  ['所有构件', 0, 2], ['轴线', 1, 1], ['轴网', 2, 1], ['辅助轴线', 2, 1, true],
  ['柱', 1, 0], ['柱', 2, 0], ['构造柱', 2, 0], ['砌体柱', 2, 0, true],
  ['墙', 1, 2], ['剪力墙', 2, 1], ['人防门框墙', 2, 1], ['砌体墙', 2, 1], ['砌体加筋', 2, 0], ['保温墙', 2, 1], ['暗梁', 2, 0], ['墙垛', 2, 0], ['幕墙', 2, 1, true],
  ['门窗洞', 1, 2], ['门', 2, 0], ['窗', 2, 0], ['门联窗', 2, 0], ['墙洞', 2, 0], ['带形窗', 2, 1], ['带形洞', 2, 0], ['飘窗', 2, 0], ['老虎窗', 2, 0], ['过梁', 2, 0], ['壁龛', 2, 0, true],
  ['梁', 1, 0], ['梁', 2, 0], ['连梁', 2, 0], ['圈梁', 2, 0, true],
  ['板', 1, 0], ['现浇板', 2, 0], ['螺旋板', 2, 0],
];

const DisplayPanel = () => (
  <aside className="flex w-[216px] shrink-0 flex-col overflow-hidden border-b border-l border-[#c0c2c8] bg-white">
    <PanelStrip close={false} />
    <div className="flex h-[22px] shrink-0 items-center border-b border-[#c8c8cc] bg-[#f0f0f0] pt-px pl-2"><h2 className="text-[#6e6e6e]">显示设置</h2></div>
    <div className="flex h-7 shrink-0 items-end gap-1 border-b border-[#c8c8cc] bg-[#f0f0f0] pl-[2px]">
      <button className="-mb-px h-[25px] w-[76px] rounded-t-[3px] border border-b-0 border-[#c8c8cc] bg-white pt-px text-[#2b86ec]">图元显示</button>
      <button className="h-[22px] w-[74px] rounded-t-[3px] bg-[#dedede] pt-px text-[#555]">楼层显示</button>
    </div>
    <div className="mt-[2px] ml-[2px] min-h-0 flex-1 overflow-hidden border border-[#c0c2c8]">
      <table className="w-[257px] table-fixed border-separate border-spacing-0 [&_td]:h-[21px] [&_td]:border-r [&_td]:border-b [&_td]:border-[#d8d8d8] [&_th]:h-[21px] [&_th]:border-r [&_th]:border-b [&_th]:border-[#c8c8c8] [&_th]:bg-[#f0f0f0] [&_th]:pt-px [&_th]:font-normal [&_th]:text-[#333]">
        <colgroup><col className="w-[132px]" /><col className="w-[63px]" /><col /></colgroup>
        <thead><tr><th>图层构件</th><th>显示图元</th><th>显示名称</th></tr></thead>
        <tbody>
          {layers.map(([name, level, state, last], i) => (
            <tr key={i}>
              <td className="p-0">
                <div className="flex h-5 items-center">
                  {level > 0 && <span className="h-full w-[9px] border-r border-[#e2e2e2]" />}
                  {level === 2 && <span className={`w-[10px] self-start border-r border-[#e2e2e2] ${last ? 'h-1/2' : 'h-full'}`} />}
                  {level === 2 && <span className="h-px w-4 bg-[#e2e2e2]" />}
                  {level < 2 && <span className="flex pl-[2px]"><Fold open dark={level === 0} /></span>}
                  <label htmlFor={`layer-${i}`} className="pt-px pl-[6px]">{name}</label>
                </div>
              </td>
              <td><span className="flex justify-center"><Check id={`layer-${i}`} state={state} /></span></td>
              <td />
            </tr>
          ))}
        </tbody>
      </table>
    </div>
    <div className="flex h-[38px] shrink-0 items-center pl-[180px]">
      <button className="h-[26px] w-[90px] shrink-0 rounded-[3px] border border-[#b8b8b8] bg-white whitespace-nowrap">恢复默认设置</button>
    </div>
  </aside>
);

// the splitter between two panels, with its grip
const Splitter = ({ right }) => (
  <div className="flex w-1 shrink-0 flex-col bg-white pt-[373px]">
    <div className="flex h-[100px] items-center bg-[#5f6b78]">
      <svg viewBox="0 0 4 6" className="h-[6px] w-1"><path d={right ? 'M0 0l4 3-4 3z' : 'M4 0L0 3l4 3z'} fill="#b8bfc8" /></svg>
    </div>
  </div>
);

const snapBtn = 'flex h-[23px] shrink-0 items-center justify-center gap-[6px] border';

const StatusBar = () => (
  <footer className="flex h-[25px] shrink-0 items-center overflow-hidden bg-[#dcdde0] pt-[3px] whitespace-nowrap text-[#333]">
    <span className="w-[245px] shrink-0">= -2385 Y = 5085</span>
    <span className="w-10">层高：</span><span className="w-[43px]">3.52</span>
    <span className="w-10">标高：</span><span className="w-[93px]">-0.6~2.92</span>
    <span className="w-[103px]">0</span>
    <span className="w-9">隐藏：</span><span className="w-[67px]">0</span>
    <div className="flex gap-[3px]">
      <button aria-label="正交" className={`${snapBtn} w-[25px] border-[#999] bg-[#ccc]`}><svg viewBox="0 0 14 14" className="h-[14px] w-[14px]" fill="none" stroke="#444"><path d="M1.500 0v12.500H14M1.500 8.500h4v4" /></svg></button>
      <button aria-label="矩形框选" className={`${snapBtn} w-9 border-[#2b8cf0] bg-white`}>
        <svg viewBox="0 0 16 16" className="h-4 w-4" fill="none"><path d="M2.500 2.500h12v12h-12z" stroke={B} /><path d="M.5 .5h4v4h-4z" fill="#f3b080" stroke="#e07030" /></svg><Caret />
      </button>
      <button aria-label="交点" className={`${snapBtn} ml-[3px] w-[25px] border-[#b0b0b0] bg-[#ccc]`}><svg viewBox="0 0 14 14" className="h-[14px] w-[14px]" stroke="#888"><path d="M0 0l14 14M14 0L0 14" /><path d="M5.500 7h3" strokeWidth="3" /></svg></button>
      <button aria-label="极轴" className={`${snapBtn} ml-[3px] w-9 border-[#999] bg-[#ccc]`}><svg viewBox="0 0 16 14" className="h-[14px] w-4" fill="none" stroke="#444"><path d="M16 12.500H1L14 1" /><circle cx="8" cy="7" r="1.500" fill="#444" /></svg><Caret /></button>
      <button aria-label="偏移输入" className={`${snapBtn} w-9 border-[#999] bg-[#ccc]`}><svg viewBox="0 0 16 14" className="h-[14px] w-4" fill="none" stroke="#444"><path d="M0 4h7M3.500 .5v7" strokeWidth="1.500" /><path d="M6 9h10v4H6z" fill="#444" /></svg><Caret /></button>
      <button className={`${snapBtn} w-[73px] border-[#2b8cf0] bg-white pt-px`}>跨图层选择</button>
      <button className={`${snapBtn} w-[61px] border-[#999] bg-[#ccc] pt-px`}>折线选择</button>
    </div>
    <span className="ml-[6px]">按鼠标左键指定第一个角点，或拾取构件图元</span>
    <span className="ml-auto w-[17px] shrink-0">55.556 FPS</span>
  </footer>
);

const App = () => (
  <div className="flex h-screen flex-col overflow-hidden bg-white font-['Noto_Sans','Noto_Sans_CJK_SC',sans-serif] text-xs leading-4 text-black">
    <Ribbon />
    <div className="flex h-[27px] shrink-0 items-end border-b border-[#8f979b] bg-[#c9ccd1] pb-px">
      <Combo label="楼层" value="首层" className="w-[82px] [&>select]:-ml-3" />
      <Combo label="类别" value="装修" className="w-[100px] pl-1" />
      <Combo label="构件类型" value="楼地面" className="w-[100px] pl-1" />
      <Combo label="构件" value="DM-5卫生间" className="w-[100px] pl-1" />
    </div>
    <div className="flex min-h-0 flex-1">
      <NavPanel />
      <div className="ml-1 flex w-[439px] shrink-0 flex-col">
        <ComponentPanel />
        <PropertyPanel />
      </div>
      <Splitter />
      <main className="relative min-w-0 flex-1 overflow-hidden bg-black">
        <Drawing />
        <ViewBar />
      </main>
      <Splitter right />
      <DisplayPanel />
    </div>
    <StatusBar />
  </div>
);

export default App;
